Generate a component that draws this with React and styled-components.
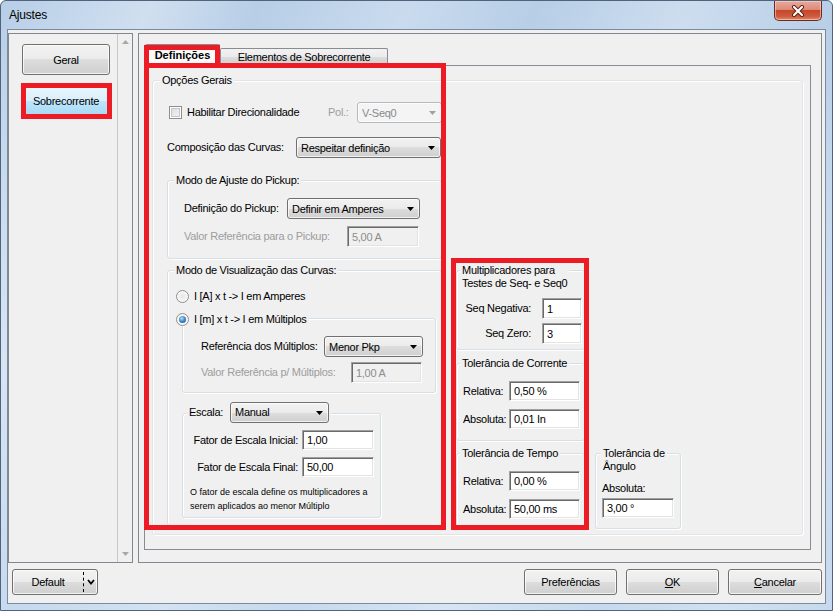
import React from 'react';
import styled, { createGlobalStyle } from 'styled-components';

const GlobalStyle = createGlobalStyle`
  html, body { margin: 0; padding: 0; background: #fff; }
  body {
    font-family: "Liberation Sans", Arial, sans-serif;
    font-size: 11px;
    letter-spacing: -0.28px;
    color: #000;
  }
  * { box-sizing: border-box; }
`;

const RED = '#ed1c24';

const Window = styled.div`
  position: relative;
  width: 833px;
  height: 611px;
  display: flex;
  flex-direction: column;
  padding: 0 6px 6px 6px;
  border: 1px solid #4f647c;
  border-radius: 6px 6px 0 0;
  overflow: hidden;
  background:
    linear-gradient(112deg, rgba(255,255,255,0) 0%, rgba(255,255,255,0.35) 14%, rgba(255,255,255,0) 24%,
      rgba(255,255,255,0.25) 38%, rgba(255,255,255,0) 50%, rgba(255,255,255,0.3) 64%, rgba(255,255,255,0) 78%,
      rgba(255,255,255,0.2) 90%, rgba(255,255,255,0) 100%),
    linear-gradient(180deg, #b7cee7 0%, #c0d5ec 40%, #c6d9ee 100%);
`;

const TitleBar = styled.div`
  height: 28px;
  display: flex;
  align-items: flex-start;
  justify-content: space-between;
  padding-left: 2px;
`;

const TitleText = styled.span`
  font-size: 12px;
  letter-spacing: -0.2px;
  line-height: 28px;
  color: #000;
`;

const CloseButton = styled.div`
  width: 48px;
  height: 20px;
  margin-right: 4px;
  display: flex;
  align-items: center;
  justify-content: center;
  border: 1px solid #6b2b22;
  border-top: none;
  border-radius: 0 0 5px 5px;
  background: linear-gradient(180deg, #e8a99c 0%, #dd8b79 45%, #c8462a 50%, #cd5a3c 80%, #e38a69 100%);
  box-shadow: inset 0 0 0 1px rgba(255, 220, 210, 0.55);
`;

const Client = styled.div`
  flex: 1;
  display: flex;
  flex-direction: column;
  padding: 3px 3px 8px 0;
  border: 1px solid #7a8ba0;
  background: #f0f0f0;
`;

const Main = styled.div`
  height: 530px;
  display: flex;
  gap: 5px;
`;

const SidePanel = styled.div`
  width: 125px;
  display: flex;
  border: 1px solid #828790;
  background: #f0f0f0;
`;

const SideList = styled.div`
  flex: 1;
  display: flex;
  flex-direction: column;
  gap: 10px;
  padding: 10px 0 0 13px;
`;

const NavButton = styled.div`
  width: 88px;
  height: 31px;
  display: flex;
  align-items: center;
  justify-content: center;
  border: 1px solid ${p => (p.$active ? '#3c7fb1' : '#707070')};
  border-radius: 3px;
  background: ${p =>
    p.$active
      ? 'linear-gradient(180deg, #eaf6fd 0%, #d9f0fc 50%, #bee6fd 50%, #a7d9f5 100%)'
      : 'linear-gradient(180deg, #f2f2f2 0%, #ebebeb 50%, #dddddd 50%, #cfcfcf 100%)'};
  box-shadow: inset 0 0 0 1px rgba(255, 255, 255, 0.75);
`;

const Marked = styled.div`
  position: relative;
  width: 88px;
  &::after {
    content: '';
    position: absolute;
    top: -2px;
    bottom: -3px;
    left: -1px;
    right: -2px;
    border: 5px solid ${RED};
    pointer-events: none;
  }
`;

const ScrollTrack = styled.div`
  width: 15px;
  display: flex;
  flex-direction: column;
  justify-content: space-between;
  align-items: center;
  padding: 6px 0 6px 0;
  border-left: 1px solid #c7c7c7;
  background: #f0f0f0;
`;

const ContentPanel = styled.div`
  flex: 1;
  display: flex;
  padding: 10px 10px 12px 5px;
  border: 1px solid #828790;
  background: #f0f0f0;
`;

const TabControl = styled.div`
  position: relative;
  flex: 1;
  display: flex;
  flex-direction: column;
`;

const TabStrip = styled.div`
  height: 21px;
  display: flex;
  align-items: flex-end;
  padding-left: 1px;
`;

const Tab = styled.div`
  width: ${p => p.$w}px;
  height: ${p => (p.$active ? 21 : 17)}px;
  display: flex;
  align-items: center;
  justify-content: center;
  border: 1px solid #898c95;
  border-bottom: none;
  border-radius: 2px 2px 0 0;
  font-weight: ${p => (p.$active ? 700 : 400)};
  letter-spacing: ${p => (p.$active ? '0' : '-0.28px')};
  background: ${p =>
    p.$active ? '#fbfbfb' : 'linear-gradient(180deg, #f2f2f2 0%, #ebebeb 50%, #dddddd 50%, #cfcfcf 100%)'};
`;

const TabPage = styled.div`
  flex: 1;
  display: flex;
  flex-direction: column;
  padding: 14px 7px 14px 7px;
  border: 1px solid #898c95;
  background: #f0f0f0;
`;

const RedBox = styled.div`
  position: absolute;
  left: ${p => p.$l}px;
  top: ${p => p.$t}px;
  width: ${p => p.$w}px;
  height: ${p => p.$h}px;
  border: 5px solid ${RED};
  pointer-events: none;
`;

const Group = styled.div`
  display: flex;
  flex-direction: column;
  align-items: stretch;
  flex: ${p => (p.$fill ? 1 : 'none')};
  align-self: ${p => (p.$w ? 'flex-start' : 'stretch')};
  width: ${p => (p.$w ? `${p.$w}px` : 'auto')};
  margin: ${p => p.$mt || 0}px 0 0 ${p => p.$ml || 0}px;
  padding: 0 ${p => p.$pr || 0}px ${p => p.$pb || 0}px ${p => p.$pl || 0}px;
  border: 1px solid ${p => (p.$light ? '#e4e4e4' : '#d5dfe5')};
  border-radius: 3px;
  box-shadow: inset 1px 1px 0 #ffffff, 1px 1px 0 #ffffff;
`;

const GroupTitle = styled.div`
  align-self: flex-start;
  margin: ${p => (p.$mt !== undefined ? p.$mt : -7)}px 0 0 ${p => p.$ml || 0}px;
  padding: 0 2px;
  line-height: 13px;
  background: #f0f0f0;
`;

const Row = styled.div`
  display: flex;
  align-items: center;
  height: ${p => p.$h || 21}px;
  margin-top: ${p => p.$mt || 0}px;
`;

const CheckRow = styled.div`
  flex: none;
  width: ${p => p.$w}px;
  display: flex;
  align-items: center;
  white-space: nowrap;
`;

const Label = styled.span`
  flex: none;
  white-space: nowrap;
  width: ${p => (p.$w ? `${p.$w}px` : 'auto')};
  color: ${p => (p.$disabled ? '#9d9d9d' : '#000')};
  line-height: 13px;
`;

const ComboBox = styled.div`
  flex: none;
  width: ${p => p.$w}px;
  height: 21px;
  display: flex;
  align-items: center;
  padding: 0 5px 0 4px;
  border: 1px solid ${p => (p.$disabled ? '#b5b9bd' : '#707070')};
  border-radius: 3px;
  color: ${p => (p.$disabled ? '#8a8a8a' : '#000')};
  background: ${p =>
    p.$disabled ? '#f4f4f4' : 'linear-gradient(180deg, #f2f2f2 0%, #ebebeb 50%, #dddddd 50%, #cfcfcf 100%)'};
  box-shadow: inset 0 0 0 1px rgba(255, 255, 255, 0.7);
`;

const ComboText = styled.span`
  flex: 1;
  white-space: nowrap;
  overflow: hidden;
`;

const TextBox = styled.div`
  flex: none;
  align-self: flex-start;
  width: ${p => p.$w}px;
  height: ${p => p.$h || 20}px;
  margin-top: ${p => p.$mt || 0}px;
  display: flex;
  align-items: center;
  padding-left: 4px;
  white-space: nowrap;
  color: ${p => (p.$disabled ? '#8d8d8d' : '#000')};
  background: ${p => (p.$disabled ? '#f0f0f0' : '#fff')};
  border: 1px solid;
  border-color: #a0a0a0 #ffffff #ffffff #a0a0a0;
  box-shadow: inset 1px 1px 0 #696969, inset -1px -1px 0 #e3e3e3;
`;

const CheckBox = styled.span`
  flex: none;
  width: 13px;
  height: 13px;
  margin: 0 5px 0 2px;
  border: 1px solid #8e8f8f;
  background: linear-gradient(135deg, #d8dbde 0%, #f6f6f6 100%);
  box-shadow: inset 0 0 0 1px #ffffff, inset 0 0 0 2px #c3c7cb;
`;

const Radio = styled.span`
  flex: none;
  width: 13px;
  height: 13px;
  margin-right: 5px;
  border-radius: 50%;
  border: 1px solid #8e8f8f;
  display: flex;
  align-items: center;
  justify-content: center;
  background: radial-gradient(circle at 50% 50%, #e6e6e6 0%, #f8f8f8 70%);
  &::after {
    content: '';
    display: ${p => (p.$checked ? 'block' : 'none')};
    width: 7px;
    height: 7px;
    border-radius: 50%;
    background: radial-gradient(circle at 40% 35%, #b7e0fb 0%, #3d86c6 50%, #1b4f86 100%);
  }
`;

const Columns = styled.div`
  display: flex;
  align-items: flex-start;
  margin-top: 15px;
`;

const LeftCol = styled.div`
  width: 275px;
  display: flex;
  flex-direction: column;
`;

const RightArea = styled.div`
  display: flex;
  align-items: flex-start;
  gap: 10px;
  margin: 168px 0 0 14px;
`;

const SeqCol = styled.div`
  width: 129px;
  display: flex;
  flex-direction: column;
`;

const FieldGrid = styled.div`
  display: grid;
  grid-template-columns: ${p => p.$c1}px ${p => p.$c2}px;
  column-gap: ${p => p.$gap || 0}px;
  row-gap: ${p => p.$rg}px;
  align-items: center;
  margin-top: ${p => p.$mt || 0}px;
  justify-items: ${p => (p.$right ? 'end' : 'start')};
  & > :nth-child(2n) { justify-self: start; }
`;

const Note = styled.div`
  margin-top: 8px;
  font-size: 9px;
  letter-spacing: 0;
  line-height: 14px;
  white-space: nowrap;
`;

const Footer = styled.div`
  height: 26px;
  margin-top: 6px;
  display: flex;
  gap: 9px;
  padding-left: 4px;
`;

const Button = styled.div`
  width: ${p => p.$w}px;
  height: 26px;
  display: flex;
  align-items: center;
  justify-content: center;
  margin-left: ${p => (p.$push ? 'auto' : '0')};
  border: 1px solid #707070;
  border-radius: 3px;
  background: linear-gradient(180deg, #f2f2f2 0%, #ebebeb 50%, #dddddd 50%, #cfcfcf 100%);
  box-shadow: inset 0 0 0 1px rgba(255, 255, 255, 0.75);
`;

const SplitMain = styled.span`
  flex: 1;
  text-align: center;
`;

const SplitArrow = styled.span`
  width: 14px;
  align-self: stretch;
  display: flex;
  align-items: center;
  justify-content: center;
  border-left: 1px dashed #000;
  margin: 2px 0;
`;

const Arrow = ({ disabled }) => (
  <svg width="7" height="4" viewBox="0 0 7 4">
    <polygon points="0,0 7,0 3.5,4" fill={disabled ? '#a0a0a0' : '#000'} />
  </svg>
);

const ScrollArrow = ({ up }) => (
  <svg width="7" height="4" viewBox="0 0 7 4">
    <polygon points={up ? '0,4 7,4 3.5,0' : '0,0 7,0 3.5,4'} fill="#a9a9a9" />
  </svg>
);

const Combo = ({ w, disabled, children }) => (
  <ComboBox $w={w} $disabled={disabled}>
    <ComboText>{children}</ComboText>
    <Arrow disabled={disabled} />
  </ComboBox>
);

export default function App() {
  return (
    <>
      <GlobalStyle />
      <Window>
        <TitleBar>
          <TitleText>Ajustes</TitleText>
          <CloseButton>
            <svg width="14" height="12" viewBox="0 0 14 12">
              <path d="M3 2 L11 10 M11 2 L3 10" stroke="#5a1d12" strokeWidth="4" strokeLinecap="round" />
              <path d="M3 2 L11 10 M11 2 L3 10" stroke="#ffffff" strokeWidth="2.2" strokeLinecap="round" />
            </svg>
          </CloseButton>
        </TitleBar>
        <Client>
          <Main>
            <SidePanel>
              <SideList>
                <NavButton>Geral</NavButton>
                <Marked>
                  <NavButton $active>Sobrecorrente</NavButton>
                </Marked>
              </SideList>
              <ScrollTrack>
                <ScrollArrow up />
                <ScrollArrow />
              </ScrollTrack>
            </SidePanel>
            <ContentPanel>
              <TabControl>
                <TabStrip>
                  <Tab $active $w={75}>Definições</Tab>
                  <Tab $w={168}>Elementos de Sobrecorrente</Tab>
                </TabStrip>
                <TabPage>
                  <Group $fill $light $pl={14}>
                    <GroupTitle $ml={-7}>Opções Gerais</GroupTitle>
                    <Columns>
                      <LeftCol>
                        <Row>
                          <CheckRow $w={161}>
                            <CheckBox />
                            <Label>Habilitar Direcionalidade</Label>
                          </CheckRow>
                          <Label $w={29} $disabled>Pol.:</Label>
                          <Combo w={85} disabled>V-Seq0</Combo>
                        </Row>
                        <Row $mt={14}>
                          <Label $w={129}>Composição das Curvas:</Label>
                          <Combo w={145}>Respeitar definição</Combo>
                        </Row>

                        <Group $mt={22} $pl={16} $pb={11}>
                          <GroupTitle $ml={-10}>Modo de Ajuste do Pickup:</GroupTitle>
                          <Row $mt={11}>
                            <Label $w={103}>Definição do Pickup:</Label>
                            <Combo w={133}>Definir em Amperes</Combo>
                          </Row>
                          <Row $mt={7}>
                            <Label $w={163} $disabled>Valor Referência para o Pickup:</Label>
                            <TextBox $w={72} $h={21} $disabled>5,00 A</TextBox>
                          </Row>
                        </Group>

                        <Group $mt={11} $pl={8} $pr={5} $pb={7}>
                          <GroupTitle $ml={-2}>Modo de Visualização das Curvas:</GroupTitle>
                          <Row $h={14} $mt={12}>
                            <Radio />
                            <Label>I [A] x t -&gt; I em Amperes</Label>
                          </Row>

                          <Group $mt={15} $ml={6} $pl={18} $pb={9}>
                            <GroupTitle $ml={-27}>
                              <Row $h={14}>
                                <Radio $checked />
                                <Label>I [m] x t -&gt; I em Múltiplos</Label>
                              </Row>
                            </GroupTitle>
                            <Row $mt={10}>
                              <Label $w={123}>Referência dos Múltiplos:</Label>
                              <Combo w={99}>Menor Pkp</Combo>
                            </Row>
                            <Row $mt={5}>
                              <Label $w={150} $disabled>Valor Referência p/ Múltiplos:</Label>
                              <TextBox $w={71} $h={21} $disabled>1,00 A</TextBox>
                            </Row>
                          </Group>

                          <Group $mt={20} $ml={6} $w={199} $pl={7} $pb={4}>
                            <GroupTitle $mt={-12} $ml={-3}>
                              <Row>
                                <Label $w={41}>Escala:</Label>
                                <Combo w={99}>Manual</Combo>
                              </Row>
                            </GroupTitle>
                            <FieldGrid $c1={108} $c2={72} $gap={4} $rg={7} $mt={7} $right>
                              <Label>Fator de Escala Inicial:</Label>
                              <TextBox $w={72}>1,00</TextBox>
                              <Label>Fator de Escala Final:</Label>
                              <TextBox $w={72}>50,00</TextBox>
                            </FieldGrid>
                            <Note>
                              O fator de escala define os multiplicadores a
                              <br />
                              serem aplicados ao menor Múltiplo
                            </Note>
                          </Group>
                        </Group>
                      </LeftCol>

                      <RightArea>
                        <SeqCol>
                          <Group $pb={5}>
                            <GroupTitle $ml={3}>
                              Multiplicadores para
                              <br />
                              Testes de Seq- e Seq0
                            </GroupTitle>
                            <FieldGrid $c1={74} $c2={40} $gap={11} $rg={4} $mt={8} $right>
                              <Label>Seq Negativa:</Label>
                              <TextBox $w={40} $h={21}>1</TextBox>
                              <Label>Seq Zero:</Label>
                              <TextBox $w={40} $h={21}>3</TextBox>
                            </FieldGrid>
                          </Group>

                          <Group $mt={13} $pl={6} $pb={11}>
                            <GroupTitle $ml={-3}>Tolerância de Corrente</GroupTitle>
                            <FieldGrid $c1={46} $c2={71} $rg={8} $mt={11}>
                              <Label>Relativa:</Label>
                              <TextBox $w={71}>0,50 %</TextBox>
                              <Label>Absoluta:</Label>
                              <TextBox $w={71}>0,01 In</TextBox>
                            </FieldGrid>
                          </Group>

                          <Group $mt={12} $pl={6} $pb={8}>
                            <GroupTitle $ml={-3}>Tolerância de Tempo</GroupTitle>
                            <FieldGrid $c1={46} $c2={71} $rg={8} $mt={11}>
                              <Label>Relativa:</Label>
                              <TextBox $w={71}>0,00 %</TextBox>
                              <Label>Absoluta:</Label>
                              <TextBox $w={71}>50,00 ms</TextBox>
                            </FieldGrid>
                          </Group>
                        </SeqCol>

                        <Group $mt={183} $w={86} $pl={6} $pb={10}>
                          <GroupTitle $ml={-1}>
                            Tolerância de
                            <br />
                            Ângulo
                          </GroupTitle>
                          <Row $h={13} $mt={9}>
                            <Label>Absoluta:</Label>
                          </Row>
                          <TextBox $w={72} $mt={3}>3,00 °</TextBox>
                        </Group>
                      </RightArea>
                    </Columns>
                  </Group>
                </TabPage>
                <RedBox $l={0} $t={1} $w={76} $h={23} />
                <RedBox $l={0} $t={19} $w={302} $h={467} />
                <RedBox $l={307} $t={214} $w={138} $h={272} />
              </TabControl>
            </ContentPanel>
          </Main>
          <Footer>
            <Button $w={86}>
              <SplitMain>Default</SplitMain>
              <SplitArrow>
                <svg width="8" height="6" viewBox="0 0 8 6">
                  <polyline points="1,1 4,4.5 7,1" fill="none" stroke="#000" strokeWidth="1.8" />
                </svg>
              </SplitArrow>
            </Button>
            <Button $w={93} $push>Preferências</Button>
            <Button $w={93}>
              <span><u>O</u>K</span>
            </Button>
            <Button $w={94}>
              <span><u>C</u>ancelar</span>
            </Button>
          </Footer>
        </Client>
      </Window>
    </>
  );
}
